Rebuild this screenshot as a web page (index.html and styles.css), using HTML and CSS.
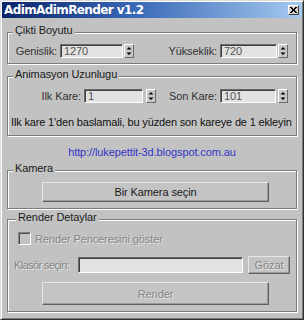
FILE: index.html
```html
<!DOCTYPE html>
<html>
<head>
<meta charset="utf-8">
<link rel="stylesheet" href="styles.css">
</head>
<body>
<div class="window">
  <div class="titlebar">
    <span class="title">AdimAdimRender v1.2</span>
    <span class="close"><svg width="7" height="6" viewBox="0 0 7 6"><path d="M0 0L6 6M1 0L7 6M6 0L0 6M7 0L1 6" stroke="#000" stroke-width="1"/></svg></span>
  </div>

  <div class="group g1">
    <div class="legend">Çikti Boyutu</div>
    <div class="row">
      <span class="lbl l1">Genislik:</span>
      <span class="input i1">1270</span>
      <span class="spin s1"><svg width="10" height="14" viewBox="0 0 10 14"><path d="M5 3L7.5 5.5H2.5Z M5 11L7.5 8.5H2.5Z" fill="#000"/></svg></span>
      <span class="lbl l2">Yükseklik:</span>
      <span class="input i2">720</span>
      <span class="spin s1"><svg width="10" height="14" viewBox="0 0 10 14"><path d="M5 3L7.5 5.5H2.5Z M5 11L7.5 8.5H2.5Z" fill="#000"/></svg></span>
    </div>
  </div>

  <div class="group g2">
    <div class="legend">Animasyon Uzunlugu</div>
    <div class="row">
      <span class="lbl l3">Ilk Kare:</span>
      <span class="input i3">1</span>
      <span class="spin s3"><svg width="10" height="14" viewBox="0 0 10 14"><path d="M5 3L7.5 5.5H2.5Z M5 11L7.5 8.5H2.5Z" fill="#000"/></svg></span>
      <span class="lbl l4">Son Kare:</span>
      <span class="input i4">101</span>
      <span class="spin s4"><svg width="10" height="14" viewBox="0 0 10 14"><path d="M5 3L7.5 5.5H2.5Z M5 11L7.5 8.5H2.5Z" fill="#000"/></svg></span>
    </div>
    <div class="note">Ilk kare 1'den baslamali, bu yüzden son kareye de 1 ekleyin</div>
  </div>

  <div class="link">http://lukepettit-3d.blogspot.com.au</div>

  <div class="group g3">
    <div class="legend">Kamera</div>
    <div class="btn cam">Bir Kamera seçin</div>
  </div>

  <div class="group g4">
    <div class="legend lg4">Render Detaylar</div>
    <div class="row chkrow">
      <span class="chk"></span>
      <span class="dis">Render Penceresini göster</span>
    </div>
    <div class="row folder">
      <span class="dis flbl">Klasör seçin:</span>
      <span class="input fin"></span>
      <span class="btn dis goz">Gözat</span>
    </div>
    <div class="btn dis rnd">Render</div>
  </div>
</div>
</body>
</html>
```

FILE: styles.css
```css
html, body {
  margin: 0;
  padding: 0;
  background: #c2c2c2;
}
.window {
  width: 304px;
  height: 320px;
  box-sizing: border-box;
  background: #c2c2c2;
  border: 1px solid;
  border-color: #dedede #303030 #303030 #dedede;
  box-shadow: inset 1px 1px 0 #fff, inset -1px -1px 0 #7a7a7a;
  font-family: "Liberation Sans", Arial, sans-serif;
  font-size: 11px;
  letter-spacing: -0.1px;
  color: #1a1a1a;
  overflow: hidden;
}
.titlebar {
  margin: 1px 1px 0 1px;
  height: 16px;
  background: linear-gradient(to right, #0a246a 0%, #3a6ab8 45%, #a6caf0 100%);
  display: flex;
  align-items: center;
  justify-content: space-between;
}
.title {
  color: #fff;
  font-family: "DejaVu Sans", sans-serif;
  font-weight: bold;
  font-size: 12px;
  padding-left: 2px;
  letter-spacing: -0.6px;
}
.close {
  width: 11px;
  height: 10px;
  box-sizing: border-box;
  margin-right: 3px;
  background: #d4d0c8;
  border: 1px solid;
  border-color: #fff #404040 #404040 #fff;
  display: flex;
  align-items: center;
  justify-content: center;
}
.group {
  margin: 0 6px;
  border: 1px solid #7c7c7c;
  box-shadow: 1px 1px 0 #fff, inset 1px 1px 0 #fff;
}
.g1 { margin-top: 14px; padding-bottom: 5px; }
.g2 { margin-top: 12px; padding-bottom: 6px; }
.g3 { margin-top: 11px; padding-bottom: 6px; }
.g4 { margin-top: 10px; padding-bottom: 6px; }
.legend {
  display: table;
  height: 13px;
  line-height: 13px;
  margin-top: -9px;
  margin-left: 5px;
  padding: 0 2px;
  background: #c2c2c2;
}
.lg4 { margin-left: 8px; }
.row {
  display: flex;
  align-items: center;
}
.g1 .row { margin-top: 7px; height: 14px; }
.g2 .row { margin-top: 8px; height: 14px; }
.lbl {
  text-align: right;
  margin-right: 3px;
  color: #333;
}
.l1 { width: 49px; }
.l2 { width: 83px; }
.l3 { width: 73px; }
.l4 { width: 61px; }
.input {
  height: 14px;
  box-sizing: border-box;
  background: #e2e2e2;
  border: 1px solid;
  border-color: #6a6a6a #fff #fff #6a6a6a;
  box-shadow: inset 1px 1px 0 #404040;
  color: #555;
  line-height: 12px;
  padding-left: 3px;
}
.i1 { width: 63px; }
.i2 { width: 57px; }
.i3 { width: 59px; }
.i4 { width: 56px; }
.spin {
  width: 10px;
  height: 14px;
  box-sizing: border-box;
  display: flex;
  background: #c8c8c8;
  border: 1px solid;
  border-color: #fff #6a6a6a #6a6a6a #fff;
  overflow: hidden;
}
.spin svg { margin: -1px; flex: none; }
.s1 { margin-left: 1px; }
.s3 { margin-left: 3px; }
.s4 { margin-left: 2px; }
.note {
  margin-top: 13px;
  padding-left: 3px;
  height: 13px;
  line-height: 13px;
  white-space: nowrap;
  letter-spacing: -0.16px;
  color: #111;
}
.link {
  margin-top: 10px;
  height: 13px;
  line-height: 13px;
  text-align: center;
  color: #3434c8;
}
.btn {
  box-sizing: border-box;
  background: #c4c4c4;
  border: 1px solid;
  border-color: #e6e6e6 #606060 #606060 #e6e6e6;
  box-shadow: inset -1px -1px 0 #9a9a9a;
  display: flex;
  align-items: center;
  justify-content: center;
}
.cam {
  margin: 7px 0 0 34px;
  width: 227px;
  height: 20px;
}
.chkrow { margin-top: 8px; height: 13px; }
.chk {
  width: 13px;
  height: 13px;
  box-sizing: border-box;
  margin-left: 10px;
  margin-right: 4px;
  border: 1px solid;
  border-color: #808080 #fff #fff #808080;
  box-shadow: inset 1px 1px 0 #505050;
  background: #c2c2c2;
}
.dis {
  color: #858585;
  text-shadow: 1px 1px 0 #e4e4e4;
}
.folder { margin-top: 11px; height: 18px; }
.flbl {
  width: 64px;
  padding-left: 6px;
  letter-spacing: -0.6px;
  white-space: nowrap;
}
.fin { width: 165px; height: 16px; }
.goz {
  margin-left: 5px;
  width: 42px;
  height: 18px;
}
.rnd {
  margin: 8px 0 0 34px;
  width: 227px;
  height: 23px;
}
```
